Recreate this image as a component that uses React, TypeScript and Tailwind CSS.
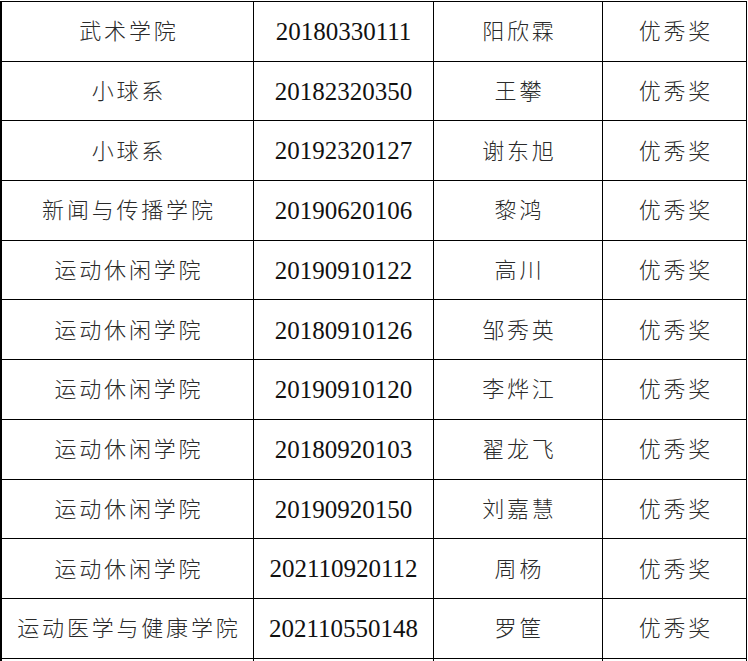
const rows = [
  ["武术学院", "20180330111", "阳欣霖", "优秀奖"],
  ["小球系", "20182320350", "王攀", "优秀奖"],
  ["小球系", "20192320127", "谢东旭", "优秀奖"],
  ["新闻与传播学院", "20190620106", "黎鸿", "优秀奖"],
  ["运动休闲学院", "20190910122", "高川", "优秀奖"],
  ["运动休闲学院", "20180910126", "邹秀英", "优秀奖"],
  ["运动休闲学院", "20190910120", "李烨江", "优秀奖"],
  ["运动休闲学院", "20180920103", "翟龙飞", "优秀奖"],
  ["运动休闲学院", "20190920150", "刘嘉慧", "优秀奖"],
  ["运动休闲学院", "202110920112", "周杨", "优秀奖"],
  ["运动医学与健康学院", "202110550148", "罗筐", "优秀奖"],
  ["", "", "", ""],
]

const cjk = "font-['Noto_Sans_CJK_SC',sans-serif] font-light text-[22px] tracking-[2.8px] pl-[2.8px] pb-[3px] text-[#2a2a2a]"
const num = "font-['Liberation_Serif',serif] text-[25px] pt-[1px] text-[#111]"

export default function App() {
  return (
    <div className="w-[748px] h-[661px] overflow-hidden bg-white">
      <div className="mt-[1px] w-[747px] border-t border-r border-black">
        {rows.map((r, i) => (
          <div
            key={i}
            className="grid grid-cols-[253px_180px_169px_144px] h-[59.7px] border-b border-black"
          >
            <div className={`flex items-center justify-center border-l-2 border-black ${cjk}`}>{r[0]}</div>
            <div className={`flex items-center justify-center border-l border-black ${num}`}>{r[1]}</div>
            <div className={`flex items-center justify-center border-l border-black ${cjk}`}>{r[2]}</div>
            <div className={`flex items-center justify-center border-l border-black ${cjk}`}>{r[3]}</div>
          </div>
        ))}
      </div>
    </div>
  )
}
